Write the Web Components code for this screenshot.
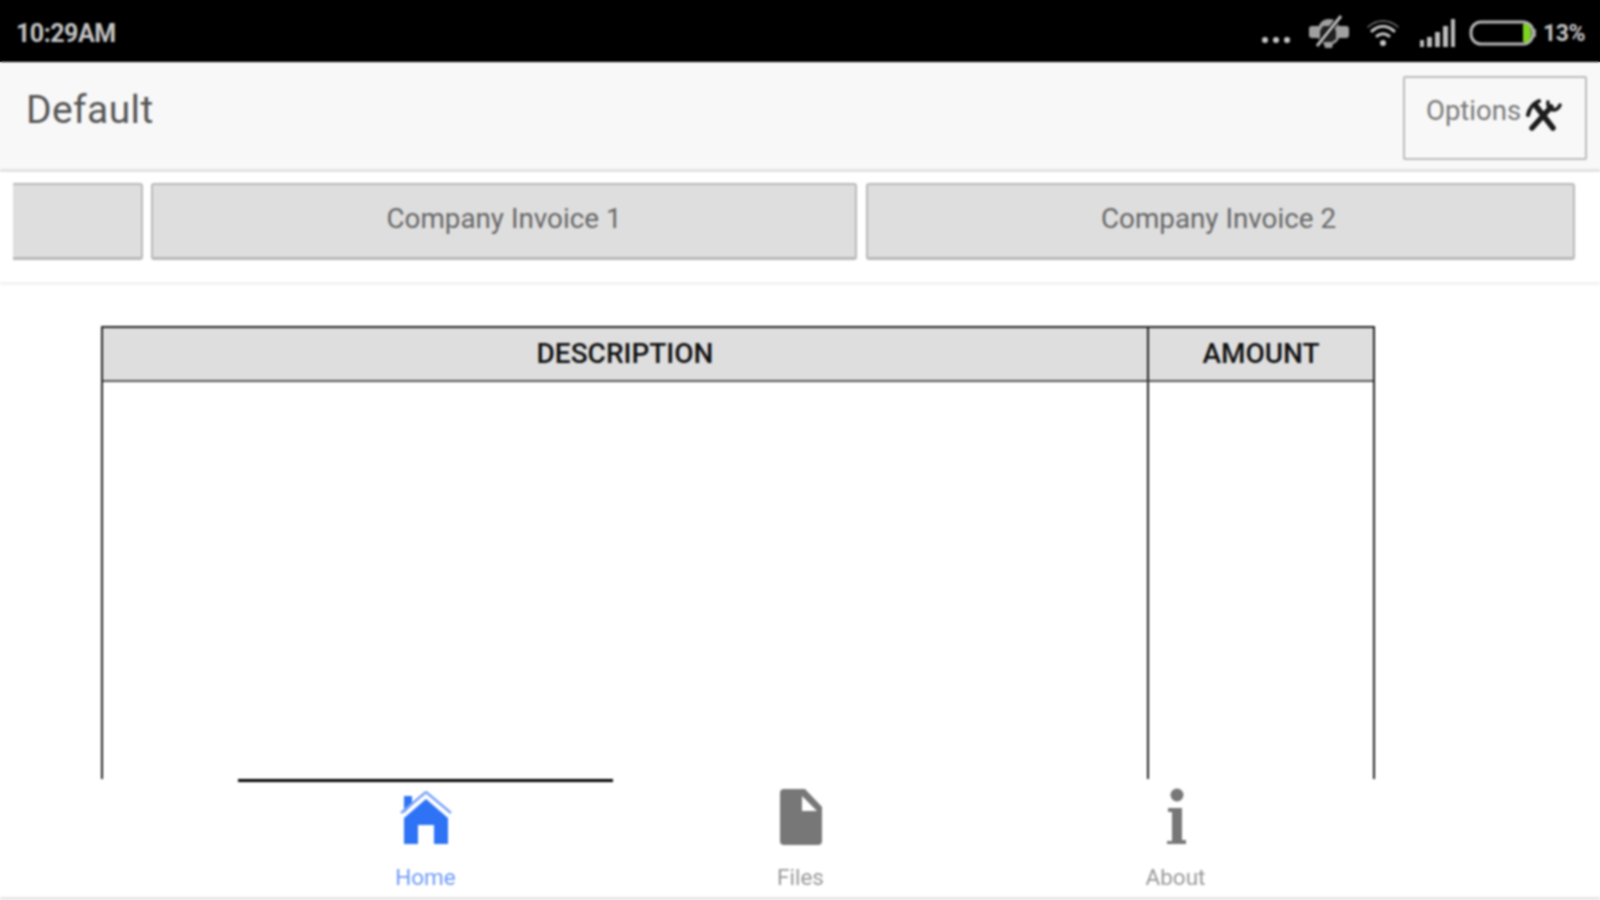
<!DOCTYPE html>
<html lang="en"><head><meta charset="utf-8"><title>Default</title>
<style>
html,body{margin:0;height:900px;overflow:hidden;font-family:Roboto,"Liberation Sans",sans-serif}
body{background:linear-gradient(#000 62px,#f8f8f8 62px,#f8f8f8 172px,#fff 172px)}
app-shell{filter:blur(1.1px)}
</style></head><body>
<app-shell>
  <status-bar slot="status"></status-bar>
  <title-bar slot="title" heading="Default"></title-bar>
  <tab-strip slot="tabs">
    <tab-button class="cut"></tab-button>
    <tab-button class="a">Company Invoice 1</tab-button>
    <tab-button class="b">Company Invoice 2</tab-button>
  </tab-strip>
  <invoice-table slot="main"></invoice-table>
  <nav-bar slot="nav"></nav-bar>
</app-shell>
<script>
function def(name, html, extra){
  customElements.define(name, class extends HTMLElement{
    constructor(){super();this.attachShadow({mode:'open'}).innerHTML=html;}
    connectedCallback(){extra&&extra(this);}
  });
}
def('app-shell',`<style>
:host{display:flex;flex-direction:column;width:1600px;height:900px;overflow:hidden}
.main{flex:1;min-height:0;overflow:hidden;display:block}
</style>
<slot name="status"></slot><slot name="title"></slot><slot name="tabs"></slot>
<div class="main"><slot name="main"></slot></div><slot name="nav"></slot>`);

def('status-bar',`<style>
:host{display:flex;align-items:center;justify-content:space-between;height:62px;background:#000;color:#c4c4c4;font:700 25px Roboto,sans-serif;padding:4px 15px 0 16px;box-sizing:border-box;flex:none}
.r{display:flex;align-items:center}
svg{display:block}
.pct{font-size:23px;margin-left:4px;letter-spacing:-.5px}
</style>
<span style="letter-spacing:-.5px">10:29AM</span>
<div class="r">
<svg width="34" height="12" viewBox="0 0 34 12" style="margin-top:14px"><g fill="#c8c8c8"><circle cx="6" cy="6" r="3"/><circle cx="17" cy="6" r="3"/><circle cx="28" cy="6" r="3"/></g></svg>
<svg width="44" height="36" viewBox="0 0 44 36" style="margin-left:14px"><path d="M2 14a3 3 0 0 1 3-3h7c1-4 5-7 10-7s9 3 10 7h7a3 3 0 0 1 3 3v6a3 3 0 0 1-3 3h-7c-1 3-3 5-6 6l-1 4h-7l-1-4c-3-1-5-3-6-6H5a3 3 0 0 1-3-3z" fill="#a0a0a0"/><path d="M16 11h10l3 5v8l-4 3h-8l-4-4v-7z" fill="#222"/><path d="M10 31 34 1" stroke="#000" stroke-width="5.5"/><path d="M10 31 34 1" stroke="#bdbdbd" stroke-width="3"/></svg>
<svg width="34" height="30" viewBox="0 0 34 30" style="margin-left:15px"><g fill="none" stroke="#c8c8c8" stroke-linecap="round"><path d="M2 9C11 1 23 1 32 9" stroke-width="1.4" stroke="#777"/><path d="M6 13c7-6 15-6 22 0" stroke-width="3"/><path d="M11 18c4-3 8-3 12 0" stroke-width="3"/></g><circle cx="17" cy="25" r="3" fill="#c8c8c8"/></svg>
<svg width="38" height="30" viewBox="0 0 38 30" style="margin-left:19px"><g fill="#bcbcbc"><rect x="1" y="22" width="4" height="7"/><rect x="8" y="19" width="5" height="10"/><rect x="16" y="14" width="5" height="15"/><rect x="24" y="8" width="5" height="21"/><rect x="32" y="1" width="4" height="28"/></g></svg>
<svg width="70" height="30" viewBox="0 0 70 30" style="margin-left:12px"><rect x="2" y="4" width="62" height="22" rx="10" fill="none" stroke="#b5b5b5" stroke-width="3"/><path d="M54 6h5c2 2 3 5 3 9s-1 7-3 9h-5z" fill="#7ed321"/><rect x="65" y="11" width="2" height="8" fill="#999"/></svg>
<span class="pct">13%</span>
</div>`);

def('title-bar',`<style>
:host{display:flex;justify-content:space-between;align-items:flex-start;height:110px;box-sizing:border-box;background:#f8f8f8;border-bottom:3px solid #e2e2e2;padding:14px 13px 0 26px;flex:none}
h1{margin:10px 0 0;font:400 39px/48px Roboto,sans-serif;color:#555;letter-spacing:.4px}
</style><h1 id="h"></h1><option-button>Options</option-button>`, el=>{el.shadowRoot.getElementById('h').textContent=el.getAttribute('heading');});

def('option-button',`<style>
:host{display:flex;align-items:flex-start;gap:5px;width:184px;height:84px;box-sizing:border-box;border:2px solid #bbb;padding:17px 0 0 21px;font:400 27.5px/32px Roboto,sans-serif;color:#777;border-radius:2px}
svg{display:block;margin-top:1px}
</style><slot></slot>
<svg width="36" height="36" viewBox="6 6 36 36"><g stroke="#1c1c1c" fill="none" stroke-linecap="round" stroke-linejoin="round"><path d="M12 38 31 17" stroke-width="5.5"/><path d="M33 38 16 16" stroke-width="5.5"/><path d="M8 25Q10 15 19 11" stroke-width="4"/><path d="M14 15Q18 16 20 20" stroke-width="3"/><path d="M28 12Q27 18 33 20Q38 20 40 15" stroke-width="3.5"/></g></svg>`);

def('tab-strip',`<style>
:host{display:flex;gap:8px;height:113px;box-sizing:border-box;padding:11px 25px 22px 13px;border-bottom:3px solid #f3f3f3;flex:none;background:#fff}
</style><slot></slot>`);

def('tab-button',`<style>
:host{flex:1 1 0;display:flex;align-items:center;justify-content:center;box-sizing:border-box;background:#dedede;border:2px solid #b8b8b8;border-bottom-width:3px;border-radius:3px;color:#666;font:400 27.8px/32px Roboto,sans-serif;padding-bottom:5px}
:host(.cut){flex:0 0 130px;border-left:0;border-radius:0 3px 3px 0}
:host(.a){flex:0 0 706px}
:host(.b){margin-left:1px;padding-right:4px}
</style><slot></slot>`);

def('invoice-table',`<style>
:host{display:block;padding:41px 0 0 101px;height:100%;box-sizing:border-box}
.t{display:grid;grid-template-columns:1046px 224px;grid-template-rows:54px 500px;width:1274px;box-sizing:border-box;border:solid #222;border-width:2px 2px 0 2px}
.h{background:#dedede;border-bottom:2px solid #555;display:flex;align-items:center;justify-content:center;font:500 28px/32px Roboto,sans-serif;color:#111;box-sizing:border-box}
.l{border-right:2px solid #222}
</style><div class="t"><div class="h l">DESCRIPTION</div><div class="h">AMOUNT</div><div class="l"></div><div></div></div>`);

const home=`<svg width="54" height="54" viewBox="0 0 54 54" style="margin:0 0 1px 2px"><g fill="#2e73f5"><path d="M4 5h8v9l-8 8z"/><path d="M26 8 48 27v26H34V34H18v19H4V27z"/></g><path d="M1 22 26 1l25 21" fill="none" stroke="#7aa4f7" stroke-width="2.5"/></svg>`;
const file=`<svg width="44" height="58" viewBox="0 0 44 58"><path d="M5 1h21l17 18v34a4 4 0 0 1-4 4H5a4 4 0 0 1-4-4V5a4 4 0 0 1 4-4z" fill="#777"/><path d="M23 8v15h15z" fill="#fff"/></svg>`;
const info=`<svg width="26" height="58" viewBox="0 0 26 58"><g fill="#777"><circle cx="14" cy="7" r="6.5"/><path d="M5 20h14v32h4v4H4v-3h5V24H5z"/></g></svg>`;
def('nav-bar',`<style>
:host{display:grid;grid-template-columns:repeat(3,375px);padding:0 237px 0 238px;height:121px;box-sizing:border-box;border-bottom:3px solid #e6e6e6;background:#fff;flex:none}
.i{display:flex;flex-direction:column;align-items:center;border-top:3px solid transparent;padding-top:6px;color:#999;font:400 22.5px/24px Roboto,sans-serif}
.i.on{border-top-color:#000;color:#6f9bf8}
.ic{height:58px;display:flex;align-items:flex-end;justify-content:center;margin-bottom:19px}
</style>
<div class="i on"><div class="ic">${home}</div>Home</div>
<div class="i"><div class="ic">${file}</div>Files</div>
<div class="i"><div class="ic">${info}</div>About</div>`);
</script>
</body></html>
